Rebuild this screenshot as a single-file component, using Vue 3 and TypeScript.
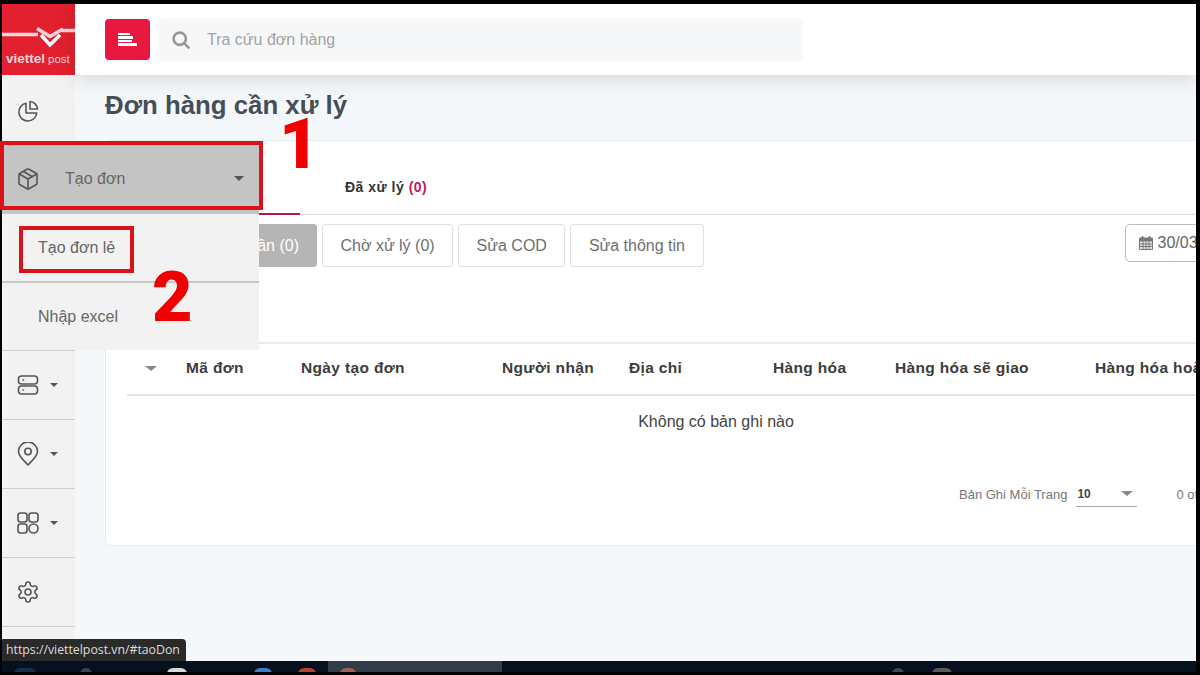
<script setup lang="ts">
const columns = ['Mã đơn', 'Ngày tạo đơn', 'Người nhận', 'Địa chỉ', 'Hàng hóa', 'Hàng hóa sẽ giao', 'Hàng hóa hoàn']

// spots of the desktop wallpaper / taskbar icons peeking out under the window
const taskbarSpots = [
  { x: 12, w: 22, c: '#14304f' },
  { x: 78, w: 12, c: '#3a4652' },
  { x: 165, w: 20, c: '#d8d8d8' },
  { x: 252, w: 18, c: '#3f7fc0' },
  { x: 296, w: 18, c: '#b8402f' },
  { x: 338, w: 16, c: '#b5532f' },
  { x: 890, w: 12, c: '#3c4a58' },
  { x: 930, w: 20, c: '#5b5a58' },
]
</script>

<template>
  <div class="frame">
    <div class="screen">
      <aside class="sidebar">
        <div class="logo">
          <svg class="logo-mark" viewBox="0 0 73 26" width="73" height="26">
            <path d="M0 9.500H36M60 5.500H73" fill="none" stroke="#f7d5d8" stroke-width="3.500" />
            <path d="M35 3.500L48 11.500L61 4" fill="none" stroke="#f7d5d8" stroke-width="3.500" />
            <path d="M39 10L48 20L58 10" fill="none" stroke="#fff" stroke-width="3.500" />
          </svg>
          <div class="logo-text"><b>viettel</b><span>post</span></div>
        </div>
        <div class="side-item first">
          <svg viewBox="0 0 24 24" class="ico">
            <path d="M10 4.200A9 9 0 1 0 20.800 14H10z" />
            <path d="M14 2.500A8 8 0 0 1 21.500 10H14z" />
          </svg>
        </div>
        <div class="side-item"></div>
        <div class="side-item"></div>
        <div class="side-item"></div>
        <div class="side-item">
          <svg viewBox="0 0 24 24" class="ico">
            <rect x="2.500" y="3" width="19" height="8" rx="3" />
            <rect x="2.500" y="13" width="19" height="8" rx="3" />
            <path d="M7 7h.5M7 17h.5" />
          </svg>
          <i class="caret"></i>
        </div>
        <div class="side-item">
          <svg viewBox="0 0 24 24" class="ico">
            <path d="M12 23C7 18 2.500 14 2.500 9.500a9.500 9.500 0 0 1 19 0C21.500 14 17 18 12 23z" />
            <circle cx="12" cy="9.500" r="3.200" />
          </svg>
          <i class="caret"></i>
        </div>
        <div class="side-item">
          <svg viewBox="0 0 24 24" class="ico">
            <rect x="2" y="2" width="9" height="9" rx="2.500" />
            <rect x="13" y="2" width="9" height="9" rx="2.500" />
            <rect x="2" y="13" width="9" height="9" rx="2.500" />
            <circle cx="17.500" cy="17.500" r="4.500" />
          </svg>
          <i class="caret"></i>
        </div>
        <div class="side-item">
          <svg viewBox="0 0 24 24" class="ico">
            <path d="M12.220 2h-.44a2 2 0 0 0-2 2v.18a2 2 0 0 1-1 1.730l-.43.25a2 2 0 0 1-2 0l-.15-.08a2 2 0 0 0-2.730.73l-.22.38a2 2 0 0 0 .73 2.730l.15.1a2 2 0 0 1 1 1.720v.51a2 2 0 0 1-1 1.740l-.15.09a2 2 0 0 0-.73 2.730l.22.38a2 2 0 0 0 2.730.73l.15-.08a2 2 0 0 1 2 0l.43.25a2 2 0 0 1 1 1.730V20a2 2 0 0 0 2 2h.44a2 2 0 0 0 2-2v-.18a2 2 0 0 1 1-1.730l.43-.25a2 2 0 0 1 2 0l.15.08a2 2 0 0 0 2.730-.73l.22-.39a2 2 0 0 0-.73-2.730l-.15-.08a2 2 0 0 1-1-1.740v-.5a2 2 0 0 1 1-1.740l.15-.09a2 2 0 0 0 .73-2.730l-.22-.38a2 2 0 0 0-2.730-.73l-.15.08a2 2 0 0 1-2 0l-.43-.25a2 2 0 0 1-1-1.730V4a2 2 0 0 0-2-2z" />
            <circle cx="12" cy="12" r="3" />
          </svg>
        </div>
      </aside>

      <div class="content">
        <header class="topbar">
          <button class="menu-btn">
            <span></span><span></span><span></span><span></span>
          </button>
          <div class="search">
            <svg viewBox="0 0 24 24" width="21" height="21" class="search-ico">
              <circle cx="10" cy="10" r="7" />
              <path d="M15.500 15.500L21 21" />
            </svg>
            <span>Tra cứu đơn hàng</span>
          </div>
        </header>

        <main class="page">
          <h1>Đơn hàng cần xử lý</h1>
          <section class="card">
            <div class="tabs">
              <div class="tab active">Cần xử lý <em>(0)</em></div>
              <div class="tab">Đã xử lý <em>(0)</em></div>
            </div>

            <div class="subtabs">
              <button class="sub on">Đơn mới cần (0)</button>
              <button class="sub">Chờ xử lý (0)</button>
              <button class="sub">Sửa COD</button>
              <button class="sub">Sửa thông tin</button>
              <div class="date">
                <svg viewBox="0 0 16 16" width="16" height="16">
                  <rect x="1" y="2.500" width="14" height="12.500" rx="1" fill="#777" />
                  <rect x="3.500" y="1" width="2" height="3" rx=".8" fill="#777" />
                  <rect x="10.500" y="1" width="2" height="3" rx=".8" fill="#777" />
                  <path d="M2 6.500h12v7.500H2z" fill="#e8e8e8" />
                  <path d="M2 9h12M2 11.500h12M5 6.500V14M8 6.500V14M11 6.500V14" stroke="#777" fill="none" />
                </svg>
                <span>30/03/2023</span>
              </div>
            </div>

            <div class="table">
              <div class="thead">
                <i class="caret light"></i>
                <span v-for="col in columns" :key="col">{{ col }}</span>
              </div>
              <div class="empty">Không có bản ghi nào</div>
            </div>

            <div class="pager">
              <span class="pager-label">Bản Ghi Mỗi Trang</span>
              <div class="pager-select"><b>10</b><i class="caret light"></i></div>
              <span class="pager-count">0 of 0</span>
            </div>
          </section>
        </main>
      </div>

      <!-- opened menu, lies over the sidebar and the card -->
      <div class="flyout">
        <div class="fly-head">
          <svg viewBox="0 0 24 24" class="ico">
            <path d="M21 8a2 2 0 0 0-1-1.730l-7-4a2 2 0 0 0-2 0l-7 4A2 2 0 0 0 3 8v8a2 2 0 0 0 1 1.730l7 4a2 2 0 0 0 2 0l7-4a2 2 0 0 0 1-1.730z" />
            <path d="M3.300 7L12 12l8.700-5M12 22V12M7.500 4.500l9 5.200" />
          </svg>
          <span>Tạo đơn</span>
          <i class="caret big"></i>
        </div>
        <div class="fly-row line">Tạo đơn lẻ</div>
        <div class="fly-row">Nhập excel</div>
      </div>

      <div class="status-tip">https://viettelpost.vn/#taoDon</div>
    </div>

    <div class="taskbar">
      <span
        v-for="spot in taskbarSpots"
        :key="spot.x"
        class="spot"
        :style="{ left: spot.x + 'px', width: spot.w + 'px', background: spot.c }"
      ></span>
      <span class="task-active"></span>
    </div>

    <!-- red marks drawn on top of the screenshot -->
    <div class="mark mark-one"></div>
    <div class="mark mark-two"></div>
    <div class="num num-one">1</div>
    <div class="num num-two">2</div>
  </div>
</template>

<style>
html,
body {
  margin: 0;
  background: #000;
}
</style>

<style scoped>
* {
  box-sizing: border-box;
}

.frame {
  position: relative;
  width: 1200px;
  height: 675px;
  padding: 4px 4px 3px 2px;
  display: flex;
  flex-direction: column;
  background: #000;
  overflow: hidden;
  font-family: "Liberation Sans", Arial, sans-serif;
}

.screen {
  position: relative;
  flex: 1;
  min-height: 0;
  display: flex;
  overflow: hidden;
  background: #f5f8fb;
}

.sidebar {
  width: 73px;
  flex-shrink: 0;
  background: #f2f2f2;
  overflow: hidden;
}

.logo {
  height: 71px;
  background: #e3202f;
  padding-top: 21px;
}

.logo-mark {
  display: block;
}

.logo-text {
  margin-top: 1px;
  padding-left: 4px;
  color: #f6d3d6;
  font-size: 13.500px;
  line-height: 14px;
  white-space: nowrap;
}

.logo-text span {
  margin-left: 3px;
  font-size: 11.500px;
}

.side-item {
  height: 69px;
  display: flex;
  align-items: center;
  gap: 10px;
  padding-left: 14px;
  border-bottom: 1px solid #cfcfcf;
}

.side-item.first {
  padding-top: 4px;
}

.ico {
  width: 24px;
  height: 24px;
  flex-shrink: 0;
  fill: none;
  stroke: #555;
  stroke-width: 1.600;
  stroke-linecap: round;
  stroke-linejoin: round;
}

.caret {
  width: 0;
  height: 0;
  border-left: 4px solid transparent;
  border-right: 4px solid transparent;
  border-top: 4px solid #555;
}

.caret.big {
  border-left-width: 5px;
  border-right-width: 5px;
  border-top-width: 5px;
}

.caret.light {
  border-left-width: 6px;
  border-right-width: 6px;
  border-top: 5px solid #888;
}

.content {
  flex: 1;
  min-width: 0;
  display: flex;
  flex-direction: column;
}

.topbar {
  position: relative;
  z-index: 1;
  height: 71px;
  flex-shrink: 0;
  display: flex;
  align-items: center;
  gap: 9px;
  padding: 0 0 1px 30px;
  background: #fff;
  box-shadow: 0 4px 20px rgba(0, 0, 0, 0.14);
}

.menu-btn {
  width: 45px;
  height: 41px;
  padding: 0 0 0 13px;
  border: none;
  border-radius: 4px;
  background: #e8173f;
  display: flex;
  flex-direction: column;
  justify-content: center;
  gap: 1px;
}

.menu-btn span {
  display: block;
  height: 2.500px;
  background: #fff;
}

.menu-btn span:nth-child(1) {
  width: 12px;
}

.menu-btn span:nth-child(2) {
  width: 15px;
}

.menu-btn span:nth-child(3) {
  width: 14px;
}

.menu-btn span:nth-child(4) {
  width: 19px;
}

.search {
  width: 643px;
  height: 43px;
  display: flex;
  align-items: center;
  gap: 15px;
  padding: 2px 0 0 12px;
  border-radius: 4px;
  background: #f6f7f9;
  color: #a3a3a3;
  font-size: 16px;
}

.search-ico {
  fill: none;
  stroke: #999;
  stroke-width: 3;
}

.page {
  flex: 1;
  min-height: 0;
  padding-left: 30px;
  overflow: hidden;
}

h1 {
  margin: 0;
  height: 65px;
  padding-top: 16px;
  color: #464e57;
  font-size: 25.800px;
  line-height: 29px;
  font-weight: 700;
}

.card {
  width: 1220px;
  height: 406px;
  background: #fff;
  border: 1px solid #e8e9eb;
  border-radius: 6px;
}

.tabs {
  height: 74px;
  display: flex;
  border-bottom: 1px solid #dcdcdc;
}

.tab {
  width: 194px;
  height: 74px;
  padding: 38px 0 0 45px;
  color: #333;
  font-size: 14px;
  letter-spacing: 0.5px;
  line-height: 16px;
  font-weight: 700;
  white-space: nowrap;
}

.tab em {
  font-style: normal;
  color: #c2185b;
}

.tab.active {
  border-bottom: 2px solid #b5173f;
}

.subtabs {
  height: 43px;
  margin-top: 9px;
  display: flex;
  gap: 5px;
  padding-left: 7px;
}

.sub {
  height: 43px;
  padding: 0 17.500px;
  border: 1px solid #e0e0e0;
  border-radius: 3px;
  background: #fff;
  color: #6f6f6f;
  font-family: inherit;
  font-size: 16px;
  white-space: nowrap;
}

.sub.on {
  width: 204px;
  padding: 0 17px 0 0;
  text-align: right;
  background: #b5b5b5;
  color: #fff;
  border-color: #b5b5b5;
}

.date {
  height: 38px;
  margin-left: 416px;
  display: flex;
  align-items: center;
  gap: 4px;
  padding-left: 12px;
  width: 160px;
  border: 1px solid #bcbcbc;
  border-radius: 5px;
  color: #666;
  font-size: 16px;
}

.table {
  margin: 75px 0 0;
}

.thead {
  height: 54px;
  margin: 0;
  display: grid;
  grid-template-columns: 41px 115px 201px 127px 144px 122px 200px 170px;
  align-items: center;
  justify-items: start;
  padding: 0 0 4px 39px;
  border-top: 2px solid #eaeaea;
  color: #3c3c3c;
  font-size: 15.500px;
  font-weight: 700;
  letter-spacing: 0.35px;
  position: relative;
}

.thead::after {
  content: "";
  position: absolute;
  left: 21px;
  right: 0;
  bottom: 0;
  border-bottom: 2px solid #e4e4e4;
}

.empty {
  height: 52px;
  padding-left: 22px;
  width: 1198px;
  display: flex;
  align-items: center;
  justify-content: center;
  color: #444;
  font-size: 16px;
}

.pager {
  margin-top: 33px;
  display: flex;
  align-items: center;
  padding-left: 853px;
  color: #777;
  font-size: 13px;
  white-space: nowrap;
}

.pager-select {
  width: 61px;
  height: 26px;
  margin-left: 9px;
  padding: 0 4px 0 1px;
  display: flex;
  align-items: center;
  justify-content: space-between;
  color: #444;
  font-size: 12px;
  border-bottom: 1px solid #aaa;
}

.pager-count {
  margin-left: 39px;
}

.flyout {
  position: absolute;
  left: 0;
  top: 139px;
  width: 257px;
  z-index: 3;
  background: #f2f2f2;
  color: #666;
  font-size: 16px;
}

.fly-head {
  height: 71px;
  display: flex;
  align-items: center;
  padding: 0 15px 0 14px;
  background: #c4c4c4;
}

.fly-head span {
  margin-left: 25px;
  flex: 1;
}

.fly-row {
  height: 67px;
  display: flex;
  align-items: center;
  padding: 1px 0 0 36px;
}

.fly-row.line {
  height: 69px;
  border-bottom: 2px solid #c8c8c8;
}

.status-tip {
  position: absolute;
  left: 0;
  bottom: 0;
  z-index: 4;
  height: 22px;
  width: 184px;
  padding-left: 4px;
  line-height: 22px;
  border-top-right-radius: 4px;
  background: #2a2a2a;
  color: #ddd;
  font-family: "Open Sans", sans-serif;
  font-size: 12.300px;
  white-space: nowrap;
}

.taskbar {
  position: relative;
  height: 11px;
  flex-shrink: 0;
  background: #07101f;
  overflow: hidden;
}

.spot {
  position: absolute;
  top: 7px;
  height: 10px;
  border-radius: 6px 6px 0 0;
}

.task-active {
  position: absolute;
  left: 326px;
  top: 0;
  width: 174px;
  height: 11px;
  background: rgba(120, 125, 135, 0.4);
}

.mark {
  position: absolute;
  z-index: 5;
  border: 4px solid #d7141a;
}

.mark-one {
  left: 0;
  top: 141px;
  width: 263px;
  height: 69px;
}

.mark-two {
  left: 19px;
  top: 226px;
  width: 115px;
  height: 47px;
}

.num {
  position: absolute;
  z-index: 6;
  color: #f00000;
  font-family: Roboto, "Liberation Sans", sans-serif;
  font-size: 70px;
  line-height: 70px;
  font-weight: 900;
}

.num-one {
  left: 279px;
  top: 109px;
}

.num-two {
  left: 152px;
  top: 262px;
}
</style>
